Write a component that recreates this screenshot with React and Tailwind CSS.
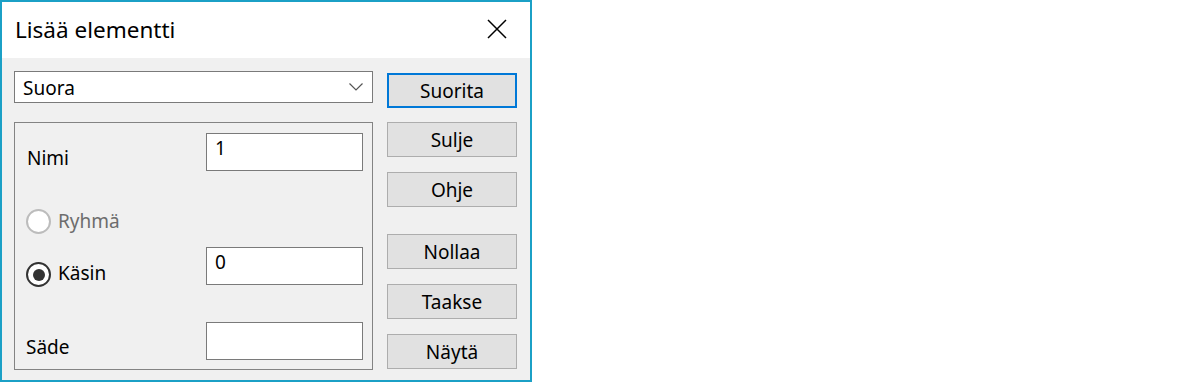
import React from "react";

// Windows-tyylinen "Lisää elementti" -dialogi
function Radio({ checked, disabled }) {
  return (
    <span
      className={
        "w-[25px] h-[25px] rounded-full border-2 bg-white flex items-center justify-center shrink-0 " +
        (disabled ? "border-[#bcbcbc]" : "border-[#333333]")
      }
    >
      {checked && <span className="w-[12px] h-[12px] rounded-full bg-[#333333]" />}
    </span>
  );
}

function Field({ value }) {
  return (
    <div className="w-[157px] h-[38px] border border-[#7a7a7a] bg-white pl-[8px] pt-[1px] leading-[26px] shrink-0">
      {value}
    </div>
  );
}

function Button({ children, primary, className = "" }) {
  return (
    <button
      className={
        "h-[35px] w-[130px] bg-[#e1e1e1] flex items-center justify-center leading-[26px] " +
        (primary ? "border-2 border-[#0078d7] " : "border border-[#adadad] ") +
        className
      }
    >
      {children}
    </button>
  );
}

export default function App() {
  return (
    <div className="w-[1200px] h-[382px] bg-white font-['Noto_Sans',sans-serif] text-[19px] text-black">
      <div className="w-[532px] h-[382px] border-2 border-[#1ba0c6] flex flex-col">
        {/* otsikkopalkki */}
        <div className="h-[56px] bg-white flex items-center justify-between pl-[13px] pr-[23px]">
          <span className="text-[22.5px] leading-[30px]">Lisää elementti</span>
          <svg width="20" height="20" viewBox="0 0 20 20" className="-mt-[2px]">
            <path d="M1 1 L19 19 M19 1 L1 19" stroke="#000" strokeWidth="1.5" fill="none" />
          </svg>
        </div>

        <div className="flex-1 bg-[#f0f0f0] flex pl-[12px] pt-[13px]">
          <div className="w-[359px] flex flex-col">
            <div className="h-[32px] border border-[#7a7a7a] bg-white flex items-center justify-between pl-[8px] pr-[9px] pt-[2px] leading-[26px]">
              <span>Suora</span>
              <svg width="14" height="8" viewBox="0 0 14 8" className="-mt-[2px]">
                <path d="M0.5 0.5 L7 7 L13.5 0.5" stroke="#555" strokeWidth="1.2" fill="none" />
              </svg>
            </div>

            <div className="mt-[19px] h-[248px] border border-[#838383] flex flex-col">
              <div className="mt-[10px] h-[38px] flex items-end">
                <span className="flex-1 pl-[12px] leading-[26px]">Nimi</span>
                <div className="mr-[9px]">
                  <Field value="1" />
                </div>
              </div>

              <div className="mt-[37px] flex items-center pl-[11px] gap-[7px]">
                <Radio disabled />
                <span className="text-[#6d6d6d] leading-[26px]">Ryhmä</span>
              </div>

              <div className="mt-[13px] h-[38px] flex items-start">
                <div className="flex-1 flex items-start pl-[11px] gap-[7px] mt-[15px]">
                  <Radio checked />
                  <span className="leading-[26px] -mt-[2px]">Käsin</span>
                </div>
                <div className="mr-[9px]">
                  <Field value="0" />
                </div>
              </div>

              <div className="mt-[37px] h-[38px] flex items-end">
                <span className="flex-1 pl-[11px] leading-[26px]">Säde</span>
                <div className="mr-[9px]">
                  <Field value="" />
                </div>
              </div>
            </div>
          </div>

          <div className="ml-[14px] flex flex-col">
            <Button primary className="mt-[2px]">Suorita</Button>
            <Button className="mt-[14px]">Sulje</Button>
            <Button className="mt-[15px]">Ohje</Button>
            <Button className="mt-[27px]">Nollaa</Button>
            <Button className="mt-[15px]">Taakse</Button>
            <Button className="mt-[15px]">Näytä</Button>
          </div>
        </div>
      </div>
    </div>
  );
}
